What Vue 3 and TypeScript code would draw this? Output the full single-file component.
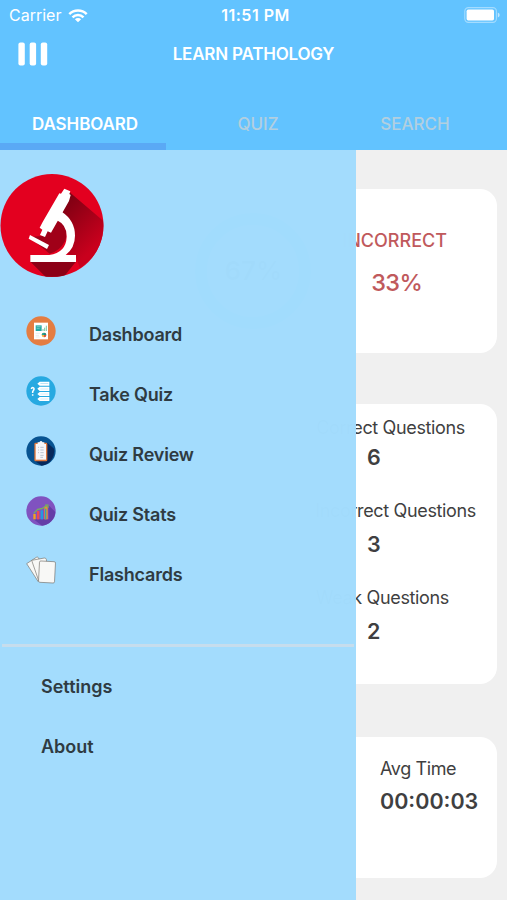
<script setup lang="ts">
import { ref } from 'vue'

type IconName = 'dashboard' | 'quiz' | 'review' | 'stats' | 'cards'

interface MenuItem {
  icon: IconName
  label: string
}

const tabs = ['DASHBOARD', 'QUIZ', 'SEARCH']
const activeTab = ref('DASHBOARD')

const menu: MenuItem[] = [
  { icon: 'dashboard', label: 'Dashboard' },
  { icon: 'quiz', label: 'Take Quiz' },
  { icon: 'review', label: 'Quiz Review' },
  { icon: 'stats', label: 'Quiz Stats' },
  { icon: 'cards', label: 'Flashcards' },
]
const secondary = ['Settings', 'About']

const counts = [
  { key: 'correct', label: 'Correct Questions', value: 6 },
  { key: 'incorrect', label: 'Incorrect Questions', value: 3 },
  { key: 'weak', label: 'Weak Questions', value: 2 },
]
</script>

<template>
  <div class="app">
    <header class="header">
      <div class="status">
        <div class="carrier">
          <span class="carrier-name">Carrier</span>
          <svg class="wifi" viewBox="0 0 20 15" width="20" height="15">
            <path d="M1.300 6.100a12.300 12.300 0 0 1 17.400 0M4.500 9.300a7.800 7.800 0 0 1 11 0" fill="none" stroke="#fff" stroke-width="2.500" />
            <path d="M10 14.200 6.900 11.300a4.400 4.400 0 0 1 6.200 0z" fill="#fff" />
          </svg>
        </div>
        <span class="clock">11:51 PM</span>
        <svg class="battery" viewBox="0 0 36 16" width="36" height="16">
          <rect x=".8" y=".6" width="31.6" height="14.8" rx="3.6" fill="none" stroke="#fff" stroke-opacity=".42" stroke-width="1.1" />
          <rect x="2.6" y="2.6" width="27.4" height="10.8" rx="1.6" fill="#fff" />
          <path d="M33.800 5.400q1.900.7 1.900 2.600t-1.900 2.600z" fill="#fff" fill-opacity=".6" />
        </svg>
      </div>
      <div class="title-bar">
        <svg class="burger" viewBox="0 0 30 24" width="30" height="24">
          <rect x=".4" y=".4" width="6.4" height="23" rx="2" fill="#fff" />
          <rect x="11.7" y=".4" width="6.4" height="23" rx="2" fill="#fff" />
          <rect x="22.8" y=".4" width="6.4" height="23" rx="2" fill="#fff" />
        </svg>
        <h1 class="title">LEARN PATHOLOGY</h1>
      </div>
      <nav class="tabs">
        <button
          v-for="tab in tabs"
          :key="tab"
          class="tab"
          :class="[tab.toLowerCase(), { active: tab === activeTab }]"
          @click="activeTab = tab"
        >
          <span>{{ tab }}</span>
        </button>
      </nav>
    </header>

    <div class="body">
      <main class="content">
        <section class="card score">
          <div class="ring">67%</div>
          <div class="score-col">
            <div class="score-label">INCORRECT</div>
            <div class="score-value">33%</div>
          </div>
        </section>
        <section class="card totals">
          <div v-for="c in counts" :key="c.key" class="count" :class="c.key">
            <div class="count-label">{{ c.label }}</div>
            <div class="count-value">{{ c.value }}</div>
          </div>
        </section>
        <section class="card timing">
          <div class="time-label">Avg Time</div>
          <div class="time-value">00:00:03</div>
        </section>
      </main>

      <aside class="drawer">
        <svg class="logo" viewBox="0 27 312 309" width="104" height="103">
          <defs>
            <clipPath id="logo-clip"><circle cx="156" cy="181.500" r="154" /></clipPath>
            <linearGradient id="logo-shade" x1="170" y1="120" x2="290" y2="240" gradientUnits="userSpaceOnUse">
              <stop offset="0" stop-color="#7a0012" />
              <stop offset="1" stop-color="#c9001d" />
            </linearGradient>
          </defs>
          <circle cx="156" cy="181.500" r="154.500" fill="#e3001f" />
          <g clip-path="url(#logo-clip)">
            <path d="M209 82 330 185v50L240 310l-13-36-35-10 28-40-2-40-35-30z" fill="url(#logo-shade)" />
            <path d="m128 213 47-57q35 32 20 72-15 30-46 38l-62-50z" fill="#a00018" />
            <path d="M92 291h135l-40 50h-45z" fill="#8c0016" />
          </g>
          <g fill="#fff">
            <path d="m193 71 18 8-3 8 4 3-5 18-54 95-10-4-8 17-15-6 7-16-8-6 9-17 50-86 5 1z" />
            <path d="m90 210 57 30-6 12-55-31z" />
            <path d="M91 270h57q50-7 52-54 1-36-29-50l14-26q40 26 40 72 0 36-28 58h31v21H91z" />
          </g>
        </svg>

        <ul class="menu">
          <li v-for="item in menu" :key="item.label" class="menu-item">
            <svg class="icon" viewBox="0 0 90 90" width="30" height="30">
              <template v-if="item.icon === 'dashboard'">
                <circle cx="45" cy="45" r="44" fill="#e47d42" />
                <path d="M24 20h42v50H24z" fill="#fff" />
                <path d="M29 28h18v17H29z" fill="#24a9a5" />
                <path d="M32 32h12M32 37h9" stroke="#9ad9d4" stroke-width="2" />
                <path d="M51 45v-6m5 6V35m5 10V29" stroke="#79c7a2" stroke-width="3" />
                <path d="M29 52h13M29 58h10M29 63h12" stroke="#dde7e5" stroke-width="2" />
                <circle cx="54" cy="57" r="7" fill="#efb43c" />
                <path d="M54 57v-7a7 7 0 0 1 7 7z" fill="#208b83" />
                <path d="M54 57h7a7 7 0 0 1-7 7z" fill="#db5145" />
                <path d="M47 57a7 7 0 0 1 7-7v7z" fill="#23a29a" />
              </template>
              <template v-else-if="item.icon === 'quiz'">
                <circle cx="45" cy="45" r="44" fill="#27a9e1" />
                <path d="m34 23 7-6h29v12H41zM34 38l7-6h29v13H41zM34 54l7-6h29v12H41zM34 69l7-6h29v12H41z" fill="#fff" />
                <path d="M43 22h24v2H43zM43 38h24v2H43zM43 53h24v2H43zM43 68h24v2H43z" fill="#a6dcf4" />
                <path d="M16 39q1-5 5-4 5 2 2 7l-3 5v4m0 4v4" fill="none" stroke="#fff" stroke-width="4.500" />
              </template>
              <template v-else-if="item.icon === 'review'">
                <circle cx="45" cy="45" r="44" fill="#075391" />
                <path d="M64 20 84 38a44 44 0 0 1-37 51L27 75z" fill="#07285a" />
                <rect x="25" y="20" width="39" height="56" rx="4" fill="#df783c" />
                <path d="M29 24h31v47H29z" fill="#f7f7fa" />
                <path d="M35 19h5q5-8 10 0h5v8H35z" fill="#f7f7fa" />
                <path d="M36 34h3m4 0h10M36 42h3m4 0h10M36 50h3m4 0h10M43 58h10M43 64h8" stroke="#bcc3d0" stroke-width="3" />
              </template>
              <template v-else-if="item.icon === 'stats'">
                <circle cx="45" cy="45" r="44" fill="#8052c0" />
                <path d="M67 27 88 48A44 44 0 0 1 48 89L23 70h45z" fill="#653da7" />
                <path d="M22 70V54h7v16z" fill="#f4a11c" />
                <path d="M33 70V45h7v25z" fill="#ed4b53" />
                <path d="M44 70V43h7v27z" fill="#269bdc" />
                <path d="M55 70V31h10v39z" fill="#e9932c" />
                <path d="M57 70V38h4v32z" fill="#36a5b0" />
                <path d="m23 52 12-12 12-2 15-9M57 27h9v9" fill="none" stroke="#77b35a" stroke-width="3.500" />
              </template>
              <template v-else>
                <g fill="#f8f8f6" stroke="#77736d" stroke-width="2" stroke-linejoin="round">
                  <path d="m2 23 29-19q4-2 6 1l24 43-25 28z" />
                  <path d="m17 13 38-7q5 0 6 4l5 46-27 21z" />
                  <rect x="39" y="16" width="48" height="64" rx="4" transform="rotate(3 63 48)" />
                </g>
              </template>
            </svg>
            <span class="menu-label">{{ item.label }}</span>
          </li>
        </ul>

        <hr class="divider" />

        <ul class="secondary">
          <li v-for="s in secondary" :key="s" class="secondary-item">{{ s }}</li>
        </ul>
      </aside>
    </div>
  </div>
</template>

<style>
body {
  margin: 0;
}
</style>

<style scoped>
.app {
  width: 507px;
  height: 900px;
  overflow: hidden;
  display: flex;
  flex-direction: column;
  background: #f0f0f0;
  color: #3f3f41;
  font-family: Inter, 'Liberation Sans', sans-serif;
  white-space: nowrap;
}

.header {
  height: 150px;
  background: #62c3ff;
  color: #fff;
  display: flex;
  flex-direction: column;
}

.status {
  height: 30px;
  display: grid;
  grid-template-columns: 1fr auto 1fr;
  align-items: center;
  padding: 0 7px 0 9px;
}

.carrier {
  display: flex;
  align-items: center;
  gap: 7px;
}

.carrier-name {
  font-size: 16px;
  line-height: 30px;
}

.clock {
  padding-left: 2px;
  font-size: 16px;
  font-weight: 600;
  line-height: 30px;
  letter-spacing: 0.5px;
}

.battery {
  justify-self: end;
}

.title-bar {
  height: 47px;
  display: grid;
  grid-template-columns: 1fr auto 1fr;
  align-items: center;
  padding: 0 18px;
}

.title {
  margin: 0;
  font-size: 17px;
  font-weight: 600;
  line-height: 48px;
  letter-spacing: -0.2px;
}

.tabs {
  flex: 1;
  display: grid;
  grid-template-columns: 166px 184px 157px;
}

.tab {
  display: flex;
  justify-content: center;
  align-items: flex-end;
  box-sizing: border-box;
  height: 73px;
  padding: 0 0 9px;
  border: 0;
  border-bottom: 7px solid transparent;
  background: none;
  color: #b2cfe0;
  font: 500 17px/20px Inter, 'Liberation Sans', sans-serif;
}

.tab.active {
  border-bottom-color: #5aa9f5;
  color: #fff;
  font-weight: 600;
  letter-spacing: -0.1px;
  padding-left: 4px;
}

.tab.search {
  padding-right: 27px;
}

.body {
  position: relative;
  flex: 1;
}

.content {
  display: flex;
  flex-direction: column;
  padding: 39px 10px 0;
}

.card {
  box-sizing: border-box;
  background: #fff;
  border-radius: 17px;
}

.score {
  height: 164px;
  display: flex;
  justify-content: flex-end;
  gap: 31px;
}

.ring {
  box-sizing: border-box;
  width: 116px;
  height: 116px;
  margin-top: 24px;
  border: 12px solid #40d0ff;
  border-radius: 50%;
  font-size: 26px;
  font-weight: 600;
  line-height: 92px;
  text-align: center;
}

.score-col {
  padding: 36px 50px 0 0;
  color: #c0595c;
  text-align: center;
}

.score-label {
  font-size: 18px;
  font-weight: 500;
  line-height: 31px;
}

.score-value {
  margin-top: 12px;
  padding-left: 4px;
  font-size: 23.500px;
  font-weight: 500;
  line-height: 30px;
  letter-spacing: -0.6px;
}

.totals {
  height: 280px;
  margin-top: 51px;
  padding-top: 14px;
  display: flex;
  flex-direction: column;
}

.count-label {
  font-size: 18px;
  line-height: 20px;
  letter-spacing: -0.35px;
  text-align: right;
}

.correct .count-label {
  padding-right: 32px;
}

.incorrect .count-label {
  padding-right: 21px;
}

.weak .count-label {
  padding-right: 48px;
}

.count-value {
  padding-left: 357px;
  padding-top: 13px;
  padding-bottom: 1px;
  font-size: 21.500px;
  font-weight: 600;
  line-height: 20px;
}

.correct .count-value {
  padding-top: 9px;
}

.incorrect {
  margin-top: 33px;
}

.weak {
  margin-top: 33px;
}

.timing {
  height: 141px;
  margin-top: 53px;
  padding: 22px 0 0 370px;
}

.time-label {
  font-size: 18px;
  line-height: 20px;
  letter-spacing: -0.4px;
}

.time-value {
  margin-top: 11px;
  font-size: 21.500px;
  font-weight: 600;
  line-height: 22px;
}

.drawer {
  position: absolute;
  top: 0;
  left: 0;
  box-sizing: border-box;
  width: 356px;
  height: 750px;
  padding-top: 24px;
  background: rgba(162, 220, 253, 0.994);
  color: #2f3b42;
}

.logo {
  display: block;
}

.menu,
.secondary {
  margin: 0;
  padding: 0;
  list-style: none;
}

.menu {
  padding-top: 28px;
}

.menu-item {
  height: 60px;
  display: flex;
  align-items: center;
  gap: 33px;
  padding-left: 26px;
}

.icon {
  margin-top: -9px;
}

.menu-label,
.secondary-item {
  font-size: 18px;
  font-weight: 600;
}

.menu-label {
  margin-top: -2px;
  letter-spacing: -0.2px;
}

.divider {
  height: 3px;
  margin: 39px 2px 0;
  border: 0;
  background: #c6dded;
}

.secondary {
  padding-top: 10px;
}

.secondary-item {
  height: 60px;
  padding-left: 41px;
  line-height: 60px;
}
</style>
